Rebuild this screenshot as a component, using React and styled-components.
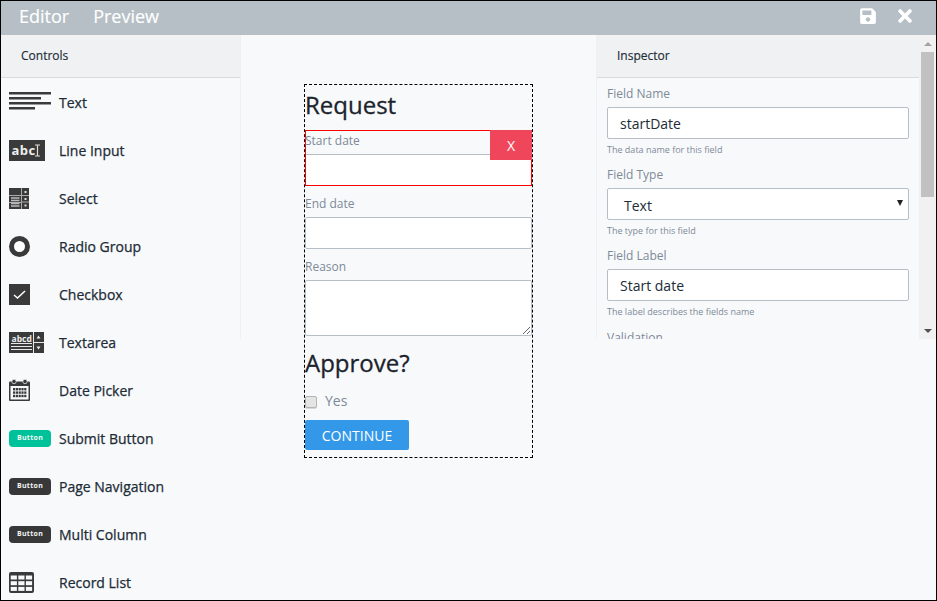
import React from "react";
import styled, { createGlobalStyle } from "styled-components";

const Global = createGlobalStyle`
  html, body { margin: 0; padding: 0; background: #f8f9fb; }
  * { box-sizing: border-box; }
  body { font-family: "Open Sans", "Noto Sans", sans-serif; overflow: hidden; }
`;

const Frame = styled.div`
  width: 937px; height: 601px; overflow: hidden;
  background: #f8f9fb; color: #212b36;
  border: 1px solid #000;
  display: flex; flex-direction: column;
`;
const TopBar = styled.header`
  height: 34px; flex: none; background: #b6bfc6; color: #fff;
  display: flex; align-items: center; padding: 0 21px 0 18px;
`;
const Tab = styled.span`
  font-size: 18px; margin-right: 24px; line-height: 28px; margin-top: -4px;
  -webkit-text-stroke: .15px #fff;
`;
const Spacer = styled.div`flex: 1;`;
const BarIcon = styled.svg`
  width: ${p => p.$w}px; height: ${p => p.$w}px; fill: #fff; margin-left: ${p => p.$ml || 0}px; margin-top: -5px; display: block;
`;
const Body = styled.main`
  height: 304px; flex: none;
  display: grid; grid-template-columns: 240px 355px 1fr;
`;
const Left = styled.aside`
  position: relative; height: 600px;
`;
const LeftRule = styled.div`
  position: absolute; right: 0; top: 0; width: 1px; height: 304px; background: #eef0f2;
`;
const PanelHead = styled.div`
  height: 43px; background: #eff1f3; border-bottom: 1px solid #d8dadc;
  font-size: 12px; line-height: 42px; padding-left: ${p => p.$pl}px; color: #212b36;
  -webkit-text-stroke: .15px #212b36;
`;
const ControlList = styled.ul`
  list-style: none; margin: 0; padding: 0 0 0 8px;
`;
const Control = styled.li`
  height: 48px; display: flex; align-items: center; font-size: 14px; font-weight: 400; color: #212b36;
  -webkit-text-stroke: .25px #212b36;
`;
const IconSlot = styled.div`
  width: 50px; flex: none; display: flex; align-items: center;
  -webkit-text-stroke: 0;
`;
const IconSvg = styled.svg`display: block;`;
const Pill = styled.div`
  width: 42px; height: 17px; border-radius: 4px; background: ${p => p.$bg}; padding-bottom: 2px;
  color: #f4f4f4; font-size: 7px; font-weight: 700; letter-spacing: .3px;
  display: flex; align-items: center; justify-content: center;
`;
const Canvas = styled.section`
  padding: 49px 0 0 63px;
  height: 600px;
`;
const FormBox = styled.div`
  width: 229px; height: 374px; border: 1px dashed #000;
  display: flex; flex-direction: column; align-items: stretch;
`;
const Heading = styled.h2`
  margin: ${p => p.$mt}px 0 ${p => p.$mb}px 0; font-size: 24px; font-weight: 400; line-height: 32px; color: #1b232c;
  -webkit-text-stroke: .3px #1b232c;
`;
const Selected = styled.div`
  position: relative; border: 1px solid #f00; height: 56px;
`;
const DeleteBtn = styled.button`
  position: absolute; top: -1px; right: -1px; width: 42px; height: 30px; border: 0;
  background: #f0465c; color: #fff; font: 400 14px "Open Sans", sans-serif; padding: 0;
`;
const Lbl = styled.label`
  display: block; font-size: 12px; line-height: 16px; color: #7d8a98; height: ${p => p.$h || 22}px;
  padding-top: ${p => p.$pt || 0}px; margin-left: ${p => p.$ml || 0}px;
`;
const BareInput = styled.input`
  display: block; width: 100%; height: 31px; background: #fff; border: 0; border-top: 1px solid #b6bfc6; padding: 0;
`;
const Input = styled.input`
  display: block; width: 100%; height: 32px; background: #fff; border: 1px solid #b6bfc6; border-radius: 2px; padding: 0 12px;
  font: 400 14px "Open Sans", sans-serif; color: #212b36; outline: 0;
`;
const Area = styled.textarea`
  display: block; width: 100%; height: 56px; background: #fff; border: 1px solid #b6bfc6; border-radius: 2px; padding: 0; margin: 0; resize: vertical; outline: 0;
`;
const CheckRow = styled.div`
  display: flex; align-items: center; height: 20px; margin-top: 11px;
`;
const Check = styled.input`
  appearance: none; width: 12px; height: 12px; margin: 4px 0 0 0;
  background: #e4e4e4; border: 1px solid #b4b4b4; border-radius: 2px; box-shadow: 0 1px 0 #d8d8d8;
`;
const CheckText = styled.span`
  font-size: 14px; color: #7d8a98; margin-left: 8px;
`;
const Continue = styled.button`
  width: 104px; height: 30px; margin-top: 10px; border: 0; border-radius: 2px; background: #3498e8; color: #fff;
  font: 400 14px "Open Sans", sans-serif; padding: 0;
`;
const Inspector = styled.aside`
  display: grid; grid-template-columns: 1fr 17px; height: 304px; overflow: hidden; border-left: 1px solid #eef0f2;
`;
const InspectorMain = styled.div`overflow: hidden; height: 304px;`;
const Fields = styled.div`padding: 8px 10px 0 10px;`;
const Field = styled.div`height: 81px; margin-top: ${p => (p.$last ? 1 : 0)}px;`;
const FieldLabel = styled.div`
  font-size: 12px; line-height: 16px; color: #7d8a98; height: 21px;
`;
const Help = styled.div`
  font-size: 9px; line-height: 12px; color: #7d8a98; margin-top: 5px;
`;
const SelectBox = styled.div`
  position: relative; height: 32px; background: #fff; border: 1px solid #b6bfc6; border-radius: 2px;
  font-size: 14px; line-height: 33px; padding-left: 16px; color: #212b36;
`;
const Caret = styled.span`
  position: absolute; right: 5px; top: 11px; width: 0; height: 0;
  border-left: 3px solid transparent; border-right: 3px solid transparent; border-top: 6px solid #222;
`;
const ScrollTrack = styled.div`
  background: #f1f1f1; height: 304px; display: flex; flex-direction: column; align-items: center; padding: 0 2px;
`;
const Arrow = styled.div`
  width: 0; height: 0; margin: ${p => (p.$up ? "7px 0 6px" : "0 0 6px")}; flex: none;
  border-left: 4px solid transparent; border-right: 4px solid transparent;
  ${p => (p.$up ? "border-bottom: 4px solid #a3a3a3;" : "border-top: 4px solid #505050;")}
`;
const Thumb = styled.div`
  width: 100%; height: 145px; background: #c1c1c1; flex: none;
`;
const TrackGap = styled.div`flex: 1;`;

const dark = "#3a3a3a";
const paper = "#f8f9fb";
const icons = {
  text: (
    <IconSvg width="42" height="20" viewBox="0 0 42 20">
      <rect y="0" width="42" height="2.5" fill={dark} /><rect y="5" width="32" height="2.5" fill={dark} />
      <rect y="10" width="42" height="2.5" fill={dark} /><rect y="15" width="26" height="2.5" fill={dark} />
    </IconSvg>
  ),
  line: (
    <IconSvg width="36" height="21" viewBox="0 0 36 21">
      <rect width="36" height="21" fill={dark} />
      <text x="2.500" y="15" fill="#eee" fontFamily="Open Sans, sans-serif" fontWeight="700" fontSize="13" letterSpacing=".4">abc</text>
      <path d="M26 5h5M28.500 5v11M26 16h5" stroke="#ddd" strokeWidth="1.200" fill="none" />
    </IconSvg>
  ),
  select: (
    <IconSvg width="20" height="21" viewBox="0 0 20 21">
      <rect width="20" height="21" fill={dark} />
      <path d="M0 7.500h20M0 14.500h12M12.500 0v21M13 14h7" stroke="#aaa" strokeWidth="1" />
      <path d="M2 10h8.500M2 12.500h8.500M2 15.500h8.500M2 18h8.500" stroke="#bbb" strokeWidth="1.300" />
      <rect x="15.500" y="16.500" width="2" height="2" fill="#ddd" />
      <rect x="15.500" y="10" width="2" height="2" fill="#ddd" />
      <rect x="15.500" y="3" width="2" height="2" fill="#ddd" />
    </IconSvg>
  ),
  radio: (
    <IconSvg width="21" height="21" viewBox="0 0 21 21">
      <circle cx="10.500" cy="10.500" r="8" fill="#fff" stroke={dark} strokeWidth="5" />
    </IconSvg>
  ),
  check: (
    <IconSvg width="21" height="21" viewBox="0 0 21 21">
      <rect width="21" height="21" fill={dark} />
      <path d="M5 11l3.500 3 7.500-7" stroke="#fff" strokeWidth="1.500" fill="none" />
    </IconSvg>
  ),
  area: (
    <IconSvg width="35" height="21" viewBox="0 0 35 21">
      <rect width="35" height="21" fill={dark} />
      <text x="2.500" y="9.500" fill="#eee" fontFamily="Open Sans, sans-serif" fontWeight="700" fontSize="8.500">abcd</text>
      <path d="M2 11.500h21M2 14.500h21M2 17.500h21M24.500 0v21M25 10.500h10" stroke="#e8e8e8" strokeWidth="1" />
      <path d="M29.500 3.500l-2 3h4zM29.500 17.500l-2-3h4z" fill="#eee" />
    </IconSvg>
  ),
  date: (
    <IconSvg width="21" height="22" viewBox="0 0 21 22">
      <rect y="2.500" width="21" height="19.500" rx="1" fill={dark} />
      <rect x="1.500" y="7" width="18" height="13.500" fill={paper} />
      <circle cx="5" cy="2.500" r="2.200" fill={dark} stroke={paper} strokeWidth=".7" />
      <circle cx="16" cy="2.500" r="2.200" fill={dark} stroke={paper} strokeWidth=".7" />
      {[0, 1, 2].map(r => [0, 1, 2, 3, 4].map(c => (
        <rect key={`${r}${c}`} x={4 + c * 2.8} y={9 + r * 3.4} width="2.200" height="2.400" fill={dark} />
      )))}
    </IconSvg>
  ),
  table: (
    <IconSvg width="25" height="21" viewBox="0 0 25 21">
      <rect width="25" height="21" rx="2" fill={dark} />
      {[0, 1, 2].map(r => [0, 1, 2].map(c => (
        <rect key={`${r}${c}`} x={1.700 + c * 7.600} y={3.500 + r * 5.700} width="6.200" height="4" fill={paper} />
      )))}
    </IconSvg>
  ),
};

const controls = [
  ["Text", icons.text],
  ["Line Input", icons.line],
  ["Select", icons.select],
  ["Radio Group", icons.radio],
  ["Checkbox", icons.check],
  ["Textarea", icons.area],
  ["Date Picker", icons.date],
  ["Submit Button", <Pill $bg="#00c29a">Button</Pill>],
  ["Page Navigation", <Pill $bg="#383838">Button</Pill>],
  ["Multi Column", <Pill $bg="#383838">Button</Pill>],
  ["Record List", icons.table],
];

export default function App() {
  return (
    <Frame>
      <Global />
      <TopBar>
        <Tab>Editor</Tab>
        <Tab>Preview</Tab>
        <Spacer />
        <BarIcon $w={18} viewBox="0 0 448 512">
          <path d="M433.900 129.900l-83.900-83.900A48 48 0 0 0 316.100 32H48C21.500 32 0 53.500 0 80v352c0 26.500 21.500 48 48 48h352c26.500 0 48-21.500 48-48V163.900a48 48 0 0 0-14.100-34zM224 416c-35.300 0-64-28.700-64-64s28.700-64 64-64 64 28.700 64 64-28.700 64-64 64zm96-304.500V212c0 6.600-5.400 12-12 12H76c-6.600 0-12-5.400-12-12V108c0-6.600 5.400-12 12-12h228.500c3.200 0 6.200 1.300 8.500 3.500l3.500 3.500c2.200 2.200 3.500 5.300 3.500 8.500z" />
        </BarIcon>
        <BarIcon $w={20} $ml={18} viewBox="0 0 352 512">
          <path d="M242.700 256l100.100-100.100c12.300-12.300 12.300-32.200 0-44.500l-22.200-22.200c-12.300-12.300-32.200-12.300-44.500 0L176 189.300 75.900 89.200c-12.300-12.300-32.200-12.300-44.500 0L9.200 111.400c-12.300 12.300-12.300 32.200 0 44.500L109.300 256 9.200 356.100c-12.300 12.300-12.300 32.200 0 44.500l22.200 22.200c12.300 12.300 32.200 12.300 44.500 0L176 322.700l100.100 100.100c12.300 12.300 32.200 12.300 44.500 0l22.200-22.200c12.300-12.300 12.300-32.200 0-44.500L242.700 256z" />
        </BarIcon>
      </TopBar>
      <Body>
        <Left>
          <PanelHead $pl={20}>Controls</PanelHead>
          <LeftRule />
          <ControlList>
            {controls.map(([name, icon]) => (
              <Control key={name}>
                <IconSlot>{icon}</IconSlot>
                {name}
              </Control>
            ))}
          </ControlList>
        </Left>
        <Canvas>
          <FormBox>
            <Heading $mt={4} $mb={9}>Request</Heading>
            <Selected>
              <Lbl $h={23} $pt={2} $ml={-1}>Start date</Lbl>
              <BareInput aria-label="Start date" />
              <DeleteBtn>X</DeleteBtn>
            </Selected>
            <Lbl $h={31} $pt={10}>End date</Lbl>
            <Input aria-label="End date" />
            <Lbl $h={31} $pt={10}>Reason</Lbl>
            <Area aria-label="Reason" />
            <Heading $mt={11} $mb={0}>Approve?</Heading>
            <CheckRow>
              <Check type="checkbox" />
              <CheckText>Yes</CheckText>
            </CheckRow>
            <Continue>CONTINUE</Continue>
          </FormBox>
        </Canvas>
        <Inspector>
          <InspectorMain>
            <PanelHead $pl={20}>Inspector</PanelHead>
            <Fields>
              <Field>
                <FieldLabel>Field Name</FieldLabel>
                <Input defaultValue="startDate" />
                <Help>The data name for this field</Help>
              </Field>
              <Field>
                <FieldLabel>Field Type</FieldLabel>
                <SelectBox>Text<Caret /></SelectBox>
                <Help>The type for this field</Help>
              </Field>
              <Field>
                <FieldLabel>Field Label</FieldLabel>
                <Input defaultValue="Start date" />
                <Help>The label describes the fields name</Help>
              </Field>
              <Field $last>
                <FieldLabel>Validation</FieldLabel>
              </Field>
            </Fields>
          </InspectorMain>
          <ScrollTrack>
            <Arrow $up />
            <Thumb />
            <TrackGap />
            <Arrow />
          </ScrollTrack>
        </Inspector>
      </Body>
    </Frame>
  );
}
